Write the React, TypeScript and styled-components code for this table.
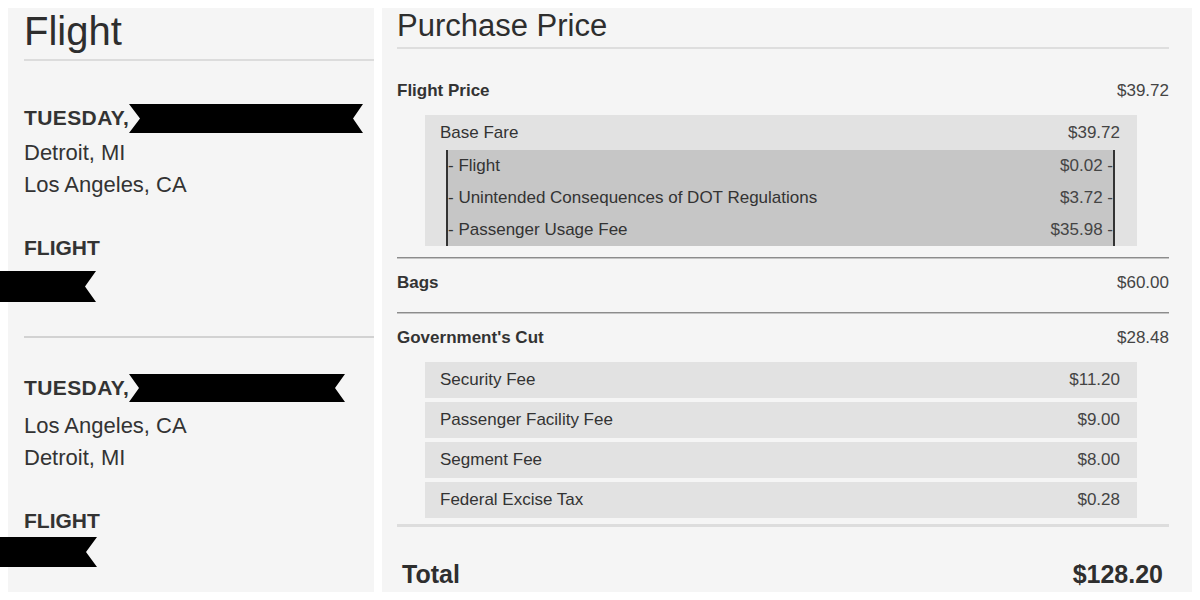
import React from "react";
import styled, { createGlobalStyle } from "styled-components";

const GlobalStyle = createGlobalStyle`
  html, body { margin: 0; padding: 0; background: #ffffff; }
  body { padding: 8px; font-family: "Liberation Sans", Arial, Helvetica, sans-serif; color: #333333; }
  * { box-sizing: border-box; }
`;

const Page = styled.div`
  display: grid;
  grid-template-columns: 366px 810px;
  column-gap: 8px;
  height: 584px;
  width: 1184px;
`;

const LeftPanel = styled.section`
  background: #f5f5f5;
  padding: 3px 0 0 16px;
  display: flex;
  flex-direction: column;
`;

const RightPanel = styled.section`
  background: #f5f5f5;
  padding: 0 23px 0 15px;
  display: flex;
  flex-direction: column;
`;

const LeftTitle = styled.h1`
  margin: 0;
  font-size: 40px;
  line-height: 40px;
  font-weight: normal;
  color: #2e2e2e;
  padding-bottom: 8px;
  border-bottom: 2px solid #dcdcdc;
`;

const RightTitle = styled.h1`
  margin: 0;
  font-size: 31px;
  line-height: 36px;
  font-weight: normal;
  color: #2e2e2e;
  padding-bottom: 3px;
  border-bottom: 2px solid #dedede;
`;

const Leg = styled.div<{ $top: number }>`
  margin-top: ${(p) => p.$top}px;
  display: flex;
  flex-direction: column;
`;

const DayLine = styled.div<{ $gap: number }>`
  display: flex;
  align-items: center;
  height: 32px;
  margin-bottom: ${(p) => p.$gap}px;
  font-size: 21px;
  font-weight: bold;
  letter-spacing: 0.4px;
  color: #333;
`;

const City = styled.div`
  height: 32px;
  line-height: 32px;
  font-size: 22px;
  color: #333;
`;

const FlightLabel = styled.div`
  margin-top: 31px;
  height: 32px;
  line-height: 32px;
  font-size: 21px;
  font-weight: bold;
  color: #333;
`;

const RibbonSvg = styled.svg<{ $offset?: number; $top?: number }>`
  display: block;
  flex: none;
  margin-left: ${(p) => p.$offset ?? 0}px;
  margin-top: ${(p) => p.$top ?? 0}px;
`;

const LegDivider = styled.hr`
  margin: 34px 0 0 0;
  border: 0;
  height: 2px;
  background: #d2d2d2;
`;

type RibbonProps = { w: number; h: number; l: number; r: number; offset?: number; top?: number };

const Ribbon = ({ w, h, l, r, offset, top }: RibbonProps) => (
  <RibbonSvg width={w} height={h} viewBox={`0 0 ${w} ${h}`} $offset={offset} $top={top}>
    <polygon points={`0,0 ${w},0 ${w - r},${h / 2} ${w},${h} 0,${h} ${l},${h / 2}`} fill="#000" />
  </RibbonSvg>
);

const MainRow = styled.div<{ $top: number }>`
  margin-top: ${(p) => p.$top}px;
  height: 32px;
  display: flex;
  align-items: center;
  justify-content: space-between;
  font-size: 17px;
  color: #333;
`;

const BoldLabel = styled.span`
  font-weight: bold;
`;

const Value = styled.span`
  color: #444;
`;

const FareBox = styled.div`
  margin: 8px 32px 0 28px;
  background: #e2e2e2;
  display: flex;
  flex-direction: column;
`;

const FareHead = styled.div`
  height: 35px;
  padding: 0 17px 0 15px;
  display: flex;
  align-items: center;
  justify-content: space-between;
  font-size: 17px;
  color: #333;
`;

const InnerBox = styled.div`
  margin: 0 22px 0 21px;
  background: #c6c6c6;
  border-left: 2px solid #333;
  border-right: 2px solid #333;
  display: flex;
  flex-direction: column;
`;

const SubRow = styled.div`
  height: 32px;
  display: flex;
  align-items: center;
  justify-content: space-between;
  font-size: 17px;
  color: #333;
`;

const Rule = styled.hr<{ $top: number }>`
  margin: ${(p) => p.$top}px 0 0 0;
  border: 0;
  border-top: 1px solid #8c8c8c;
  border-bottom: 1px solid #c4c4c4;
  height: 0;
`;

const FeeList = styled.div`
  margin: 8px 32px 0 28px;
  display: flex;
  flex-direction: column;
  gap: 4px;
`;

const FeeBox = styled.div`
  height: 36px;
  background: #e2e2e2;
  padding: 0 17px 0 15px;
  display: flex;
  align-items: center;
  justify-content: space-between;
  font-size: 17px;
  color: #333;
`;

const ThickRule = styled.hr`
  margin: 6px 0 0 0;
  border: 0;
  height: 3px;
  background: #dddddd;
`;

const TotalRow = styled.div`
  margin-top: 32px;
  height: 30px;
  padding: 0 6px 0 5px;
  display: flex;
  align-items: center;
  justify-content: space-between;
  font-size: 25px;
  font-weight: bold;
  color: #2e2e2e;
`;

type LegData = { cities: string[]; day: RibbonProps; flight: RibbonProps; top: number; gap: number };

const legs: LegData[] = [
  {
    cities: ["Detroit, MI", "Los Angeles, CA"],
    day: { w: 234, h: 29, l: 11, r: 10 },
    flight: { w: 96, h: 31, l: 0, r: 11, offset: -24, top: 7 },
    top: 41,
    gap: 3,
  },
  {
    cities: ["Los Angeles, CA", "Detroit, MI"],
    day: { w: 216, h: 28, l: 10, r: 10 },
    flight: { w: 97, h: 30, l: 0, r: 11, offset: -24, top: 0 },
    top: 34,
    gap: 6,
  },
];

const subFares = [
  ["- Flight", "$0.02 -"],
  ["- Unintended Consequences of DOT Regulations", "$3.72 -"],
  ["- Passenger Usage Fee", "$35.98 -"],
];

const fees = [
  ["Security Fee", "$11.20"],
  ["Passenger Facility Fee", "$9.00"],
  ["Segment Fee", "$8.00"],
  ["Federal Excise Tax", "$0.28"],
];

export default function App() {
  return (
    <>
      <GlobalStyle />
      <Page>
        <LeftPanel>
          <LeftTitle>Flight</LeftTitle>
          {legs.map((leg, i) => (
            <React.Fragment key={i}>
              {i > 0 && <LegDivider />}
              <Leg $top={leg.top}>
                <DayLine $gap={leg.gap}>
                  TUESDAY,
                  <Ribbon {...leg.day} />
                </DayLine>
                {leg.cities.map((c) => (
                  <City key={c}>{c}</City>
                ))}
                <FlightLabel>FLIGHT</FlightLabel>
                <Ribbon {...leg.flight} />
              </Leg>
            </React.Fragment>
          ))}
        </LeftPanel>
        <RightPanel>
          <RightTitle>Purchase Price</RightTitle>
          <MainRow $top={26}>
            <BoldLabel>Flight Price</BoldLabel>
            <Value>$39.72</Value>
          </MainRow>
          <FareBox>
            <FareHead>
              <span>Base Fare</span>
              <Value>$39.72</Value>
            </FareHead>
            <InnerBox>
              {subFares.map(([label, val]) => (
                <SubRow key={label}>
                  <span>{label}</span>
                  <Value>{val}</Value>
                </SubRow>
              ))}
            </InnerBox>
          </FareBox>
          <Rule $top={11} />
          <MainRow $top={8}>
            <BoldLabel>Bags</BoldLabel>
            <Value>$60.00</Value>
          </MainRow>
          <Rule $top={13} />
          <MainRow $top={8}>
            <BoldLabel>Government's Cut</BoldLabel>
            <Value>$28.48</Value>
          </MainRow>
          <FeeList>
            {fees.map(([label, val]) => (
              <FeeBox key={label}>
                <span>{label}</span>
                <Value>{val}</Value>
              </FeeBox>
            ))}
          </FeeList>
          <ThickRule />
          <TotalRow>
            <span>Total</span>
            <span>$128.20</span>
          </TotalRow>
        </RightPanel>
      </Page>
    </>
  );
}
